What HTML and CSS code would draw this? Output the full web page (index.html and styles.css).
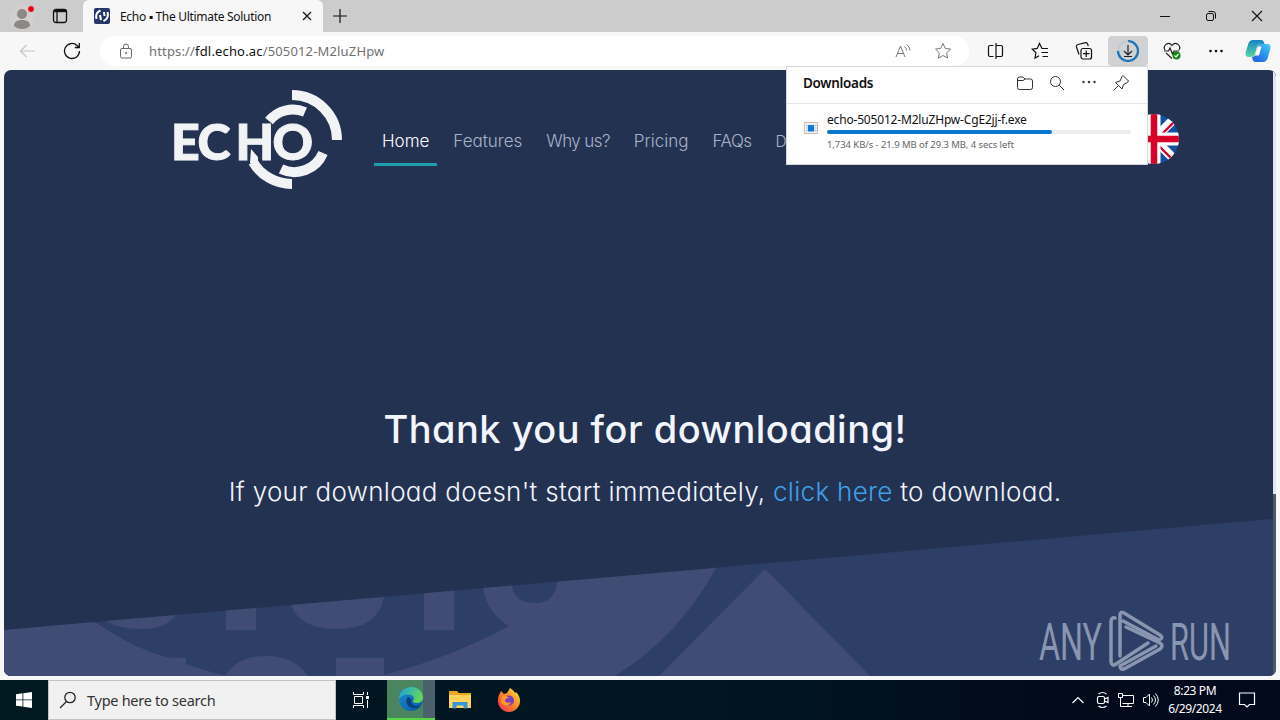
FILE: index.html
```html
<!DOCTYPE html>
<html lang="en">
<head>
    <meta charset="UTF-8">
    <meta name="viewport" content="width=device-width, initial-scale=1.0">
    <title>Echo ▪ The Ultimate Solution</title>
    <link rel="stylesheet" href="styles.css">
</head>
<body>
    <div class="browser">
        <div class="tabstrip">
            <div class="tab-tools">
                <svg class="profile" width="26" height="28" viewBox="0 0 26 28">
                    <circle cx="13" cy="15" r="12.500" fill="#d3cfcf"/>
                    <circle cx="13" cy="12" r="5" fill="#8c8886"/>
                    <path d="M5 24c0-4 3-6 8-6s8 2 8 6c-2 2-5 3-8 3s-6-1-8-3z" fill="#8c8886"/>
                    <circle cx="22" cy="7" r="3.500" fill="#e60012" stroke="#d8d8d8"/>
                </svg>
                <svg class="workspace" width="16" height="16" viewBox="0 0 16 16" fill="none" stroke="#111" stroke-width="1.300">
                    <rect x="1.500" y="1.500" width="13" height="13" rx="2.500"/>
                    <path d="M2 3h12.500" stroke-width="2.400"/>
                    <path d="M5 4v10.500"/>
                </svg>
            </div>
            <div class="tab">
                <svg width="16" height="16" viewBox="0 0 16 16" fill="none" stroke="#fff">
                    <rect width="16" height="16" rx="2" fill="#26356b" stroke="none"/>
                    <path d="M2.500 11c-1-4 .5-7 4-8.500M6 7l1 5M10 4l.5 4M13.500 4c1 4-.5 7.500-4 9" stroke-width="2"/>
                </svg>
                <span class="tab-title">Echo ▪ The Ultimate Solution</span>
                <svg class="tab-close" width="10" height="10" viewBox="0 0 10 10" stroke="#111" stroke-width="1.200"><path d="M1 1l8 8M9 1L1 9"/></svg>
            </div>
            <svg class="new-tab" width="14" height="14" viewBox="0 0 14 14" stroke="#111" stroke-width="1.200"><path d="M7 0v14M0 7h14"/></svg>
            <div class="window-controls">
                <svg width="12" height="12" viewBox="0 0 12 12"><path d="M1 6.500h10" stroke="#111"/></svg>
                <svg width="12" height="12" viewBox="0 0 12 12" fill="none" stroke="#111"><rect x="1.500" y="3.500" width="7" height="7" rx="1.500"/><path d="M3.500 1.500h4.500a2.500 2.500 0 0 1 2.500 2.500v4.500"/></svg>
                <svg width="12" height="12" viewBox="0 0 12 12" stroke="#111" stroke-width="1.100"><path d="M1 1l10 10M11 1L1 11"/></svg>
            </div>
        </div>

        <div class="toolbar">
            <svg class="back" width="18" height="16" viewBox="0 0 18 16" fill="none" stroke="#c6c6c6" stroke-width="1.200"><path d="M16 8H1.500M7.500 2L1.500 8l6 6"/></svg>
            <svg class="reload" width="18" height="18" viewBox="0 0 18 18" fill="none" stroke="#111" stroke-width="1.300"><path d="M16.500 9a7.500 7.500 0 1 1-2.500-5.600L16 5.300M16.300 1v4.500h-4.500"/></svg>
            <div class="address-bar">
                <svg width="14" height="16" viewBox="0 0 14 16" fill="none" stroke="#666"><rect x="1.500" y="5.500" width="11" height="9.500" rx="1.500"/><path d="M4.500 5.500V3.500a2.500 2.500 0 0 1 5 0v2"/><circle cx="7" cy="10" r=".6" fill="#666"/></svg>
                <span class="url">https://<b>fdl.echo.ac</b>/505012-M2luZHpw</span>
                <svg class="read-aloud" width="16" height="16" viewBox="0 0 16 16" fill="none" stroke="#777"><path d="M1 14L5.500 3 10 14M2.500 10.500h6M9.500 3.500q2 1.500 2 4M11.500 1.500q3.500 2 3.500 6"/></svg>
                <svg class="favorite" width="18" height="18" viewBox="0 0 18 18" fill="none" stroke="#777"><path d="M9 1.500l2.300 4.900 5.200.7-3.800 3.700.9 5.300L9 13.500l-4.600 2.600.9-5.300L1.500 7.100l5.200-.7z"/></svg>
            </div>
            <div class="actions">
                <svg width="18" height="18" viewBox="0 0 18 18" fill="none" stroke="#111" stroke-width="1.200"><path d="M6.500 3.500H3a1.500 1.500 0 0 0-1.500 1.500v8A1.500 1.500 0 0 0 3 14.500h3.500M9 3.500h5a1.500 1.500 0 0 1 1.500 1.500v8a1.500 1.500 0 0 1-1.500 1.500H9M9 1v16"/></svg>
                <svg width="18" height="18" viewBox="0 0 18 18" fill="none" stroke="#111" stroke-width="1.200"><path d="M12 6.500h-1L8.500 1.500 6.200 6.400l-5 .7 3.700 3.700-.9 5.200 4-2.200M11.500 6.500H17M10.500 10.500H17M11.500 14.500H17"/></svg>
                <svg width="18" height="18" viewBox="0 0 18 18" fill="none" stroke="#111" stroke-width="1.200"><rect x="6" y="6.500" width="10.500" height="10.500" rx="2"/><path d="M11.200 8.500v6.500M8 11.700h6.500M4 12.500L1.500 5A2 2 0 0 1 3 2.500l7.500-1.800a2 2 0 0 1 2.200 1.500l.5 2"/></svg>
                <div class="download-button">
                    <svg width="24" height="24" viewBox="0 0 24 24" fill="none"><path d="M2 12A10 10 0 0 1 12 2" stroke="#c4c8cc" stroke-width="2"/><path d="M12 2a10 10 0 1 1-10 10" stroke="#1b73b8" stroke-width="2.200"/><path d="M12 6v10M8 12l4 4 4-4M8 17.500h8" stroke="#222" stroke-width="1.200"/></svg>
                </div>
                <svg width="18" height="18" viewBox="0 0 18 18" fill="none" stroke="#222" stroke-width="1.200"><path d="M2 8C-.5 4 5-1.500 9 3.500 13-1.500 18.500 4 16 8M1 9h4.500L7 6l2.500 6L11 9h5M3 11l6 5.500"/><circle cx="13.500" cy="13.500" r="4" fill="#138613" stroke="none"/><path d="M11.500 13.500l1.500 1.500 2.500-3" stroke="#fff"/></svg>
                <svg width="18" height="18" viewBox="0 0 18 18" fill="#111"><circle cx="3.500" cy="9" r="1.300"/><circle cx="9" cy="9" r="1.300"/><circle cx="14.500" cy="9" r="1.300"/></svg>
                <svg class="copilot" width="26" height="24" viewBox="0 0 26 24">
                    <defs>
                        <linearGradient id="pilotA" x1="0" y1="0" x2="0" y2="1"><stop offset="0" stop-color="#1583c8"/><stop offset="1" stop-color="#5dd6a0"/></linearGradient>
                        <linearGradient id="pilotB" x1="1" y1="0" x2="0" y2="1"><stop offset="0" stop-color="#49d3f4"/><stop offset=".5" stop-color="#2a8cf0"/><stop offset="1" stop-color="#2158d8"/></linearGradient>
                    </defs>
                    <path d="M8 1h8c2 0 3 1.500 3.500 4h-4c-2 0-3 1-3.500 3l-2 7c-.5 2-1.500 3-4 3H4c-3 0-4-2-3.200-5l2.400-8C4 2.500 5.500 1 8 1z" fill="url(#pilotA)"/>
                    <path d="M15.500 5H22c3 0 4 2 3.300 5L23 18c-.8 3.500-2.500 5-5 5h-7c-2.500 0-3.500-2-4-5 2 0 3-1 3.500-3l2-7c.5-2 1-3 3-3z" fill="url(#pilotB)"/>
                    <path d="M13 7.500h3.500L14 16.500H9.800z" fill="#fff"/>
                </svg>
            </div>
        </div>

        <div class="page">
            <svg class="backdrop" width="1272" height="606" viewBox="4 70 1272 606">
                <path d="M4 630L1273 519V676H4z" fill="#2e3f67"/>
                <g fill="#404c74">
                    <path d="M4 630L95 622Q136 650 170 658H186V664Q205 671 228 676H4z"/>
                    <path d="M106 621L176 615Q166 629 141 629Q120 629 106 621z"/>
                    <path d="M226 610.600L256 608V630H226z"/>
                    <path d="M291 605L384 597Q378 629 337 629Q300 629 291 605z"/>
                    <path d="M424 593.300L454 590.700V630H424z"/>
                    <path d="M483 588L512 585.600Q514 603 535 603Q555 603 557 581.700L716 568Q680 635 615 676H380Q450 658 509 626Q487 613 483 588z"/>
                    <path d="M225 676Q237 656 265 656Q295 656 308 676zM336 658H384V676H336z"/>
                    <path d="M765 569L870 676H659z"/>
                </g>
            </svg>
            <div class="site-header">
                <svg class="echo-logo" width="172" height="102" viewBox="0 0 172 102">
                    <g fill="none" stroke="#f2f3f5" stroke-width="10">
                        <path d="M120 6A45 45 0 0 1 165 51"/>
                        <path d="M120 95A45 45 0 0 1 81 73"/>
                        <path d="M97 32A31 31 0 0 1 133 23"/>
                        <path d="M151 64A31 31 0 0 1 109 80"/>
                    </g>
                    <path d="M79 60l7 8v8l-8-2z" fill="#f2f3f5"/>
                    <text x="-1 25.500 63.500 100.500" y="70.500">ECHO</text>
                </svg>
                <nav class="menu">
                    <a class="active">Home</a>
                    <a>Features</a>
                    <a class="why">Why us?</a>
                    <a>Pricing</a>
                    <a class="faqs">FAQs</a>
                    <a class="more">D</a>
                </nav>
                <svg class="flag" width="50" height="50" viewBox="0 0 50 50">
                    <clipPath id="round"><circle cx="25" cy="25" r="25"/></clipPath>
                    <g clip-path="url(#round)" fill="none">
                        <path d="M0 0h50v50H0z" fill="#1450a0"/>
                        <path d="M0 0l50 50M50 0L0 50" stroke="#fff" stroke-width="9"/>
                        <path d="M25 27l25 25M28 25L50 3" stroke="#d80027" stroke-width="2.400"/>
                        <path d="M25 0v50M0 25h50" stroke="#fff" stroke-width="13"/>
                        <path d="M25 0v50M0 25h50" stroke="#d80027" stroke-width="6.500"/>
                    </g>
                </svg>
            </div>
            <div class="message">
                <h1>Thank you for downloading!</h1>
                <p>If your download doesn't start immediately, <a>click here</a> to download.</p>
            </div>
            <div class="scrollbar"><div class="thumb"></div></div>
        </div>

        <div class="downloads">
            <div class="downloads-header">
                <h2>Downloads</h2>
                <svg width="18" height="18" viewBox="0 0 18 18" fill="none" stroke="#333"><path d="M1.500 5a2 2 0 0 1 2-2H7l2 2h5.500a2 2 0 0 1 2 2v6.500a2 2 0 0 1-2 2h-11a2 2 0 0 1-2-2zM1.500 6.500H7L9 5"/></svg>
                <svg width="18" height="18" viewBox="0 0 18 18" fill="none" stroke="#333"><circle cx="7.500" cy="7.500" r="5"/><path d="M11 11l5 5"/></svg>
                <svg width="18" height="18" viewBox="0 0 18 18" fill="#333"><circle cx="3.500" cy="8" r="1.200"/><circle cx="9" cy="8" r="1.200"/><circle cx="14.500" cy="8" r="1.200"/></svg>
                <svg width="18" height="18" viewBox="0 0 18 18" fill="none" stroke="#333"><path d="M11 1.500l5.500 5.500-1 1.500-4 2-1.500 4.500L3.500 8.500 8 7l2-4.500zM6.500 11.500L1.500 16.500"/></svg>
            </div>
            <div class="download-item">
                <svg width="14" height="12" viewBox="0 0 14 12"><rect x=".5" y=".5" width="13" height="11" fill="#eef0f2" stroke="#c9bcb3"/><path d="M2 3.500h2M2 6h2M2 8.500h2M10.500 3.500h2M10.500 6h2M10.500 8.500h2" stroke="#9cc3e2"/><rect x="4" y="3" width="6" height="6.500" fill="#1478d4"/></svg>
                <div class="download-info">
                    <div class="file-name">echo-505012-M2luZHpw-CgE2jj-f.exe</div>
                    <div class="progress"><div class="progress-value" style="width: 74%"></div></div>
                    <div class="status">1,734 KB/s - 21.9 MB of 29.3 MB, 4 secs left</div>
                </div>
            </div>
        </div>
    </div>

    <div class="taskbar">
        <svg class="start" width="16" height="16" viewBox="0 0 16 16" fill="#fff"><path d="M0 2.200l6.500-.9v6.200H0zM7.300 1.200L16 0v7.500H7.300zM0 8.300h6.500v6.300L0 13.700zM7.300 8.300H16V16l-8.700-1.200z"/></svg>
        <div class="search">
            <svg width="18" height="18" viewBox="0 0 18 18" fill="none" stroke="#222" stroke-width="1.300"><circle cx="11" cy="6.500" r="5.200"/><path d="M7.500 10.500L1 17"/></svg>
            <span>Type here to search</span>
        </div>
        <div class="task"><svg width="18" height="18" viewBox="0 0 18 18" fill="none" stroke="#fff"><path d="M1.500 1v2.500h10V1M1.500 17v-2.500h10V17M2.500 5.500h8v7h-8zM15.500 1v3M15.500 9v8"/><path d="M14 5h3v3h-3z" fill="#fff" stroke="none"/></svg></div>
        <div class="task active">
            <svg width="26" height="26" viewBox="0 0 26 26">
                <defs>
                    <linearGradient id="edgeTop" x1="0" y1="0" x2="1" y2=".4"><stop offset="0" stop-color="#1ba0e0"/><stop offset="1" stop-color="#62d75c"/></linearGradient>
                    <linearGradient id="edgeLow" x1="0" y1="0" x2="1" y2="1"><stop offset="0" stop-color="#1a91d8"/><stop offset="1" stop-color="#0b54a0"/></linearGradient>
                </defs>
                <circle cx="13" cy="13" r="12" fill="url(#edgeLow)"/>
                <path d="M1 13C1 6 6 1 13 1s12 5 12 10.500c0 4-3 5.500-6 5.500-4 0-5-1.500-3.500-3 1.500-2-.5-5.500-5-5.500S2.500 10.500 1 13z" fill="url(#edgeTop)"/>
                <path d="M10 11c-4 5 0 12 8 11 2 0 4-1 5-2.500-6 2-11-1-9.500-6-1-1-2.500-2.500-3.500-2.500z" fill="#083f80"/>
            </svg>
        </div>
        <div class="task">
            <svg width="22" height="20" viewBox="0 0 22 20"><path d="M0 1h8l2 2h12v15H0z" fill="#e9a820"/><path d="M0 5h22v13H0z" fill="#ffd35c"/><path d="M3.500 18.500v-6.500h15v6.500h-4v-3h-7v3z" fill="#3997d4"/></svg>
        </div>
        <div class="task">
            <svg width="24" height="24" viewBox="0 0 24 24">
                <defs><linearGradient id="fox" x1="1" y1="0" x2="0" y2="1"><stop offset="0" stop-color="#fff04a"/><stop offset=".45" stop-color="#ff8b20"/><stop offset="1" stop-color="#f0285e"/></linearGradient></defs>
                <path d="M3 5l1-2 3 3 3-1 3-5c2 1 4 3 5 5l1-1c3 3 4 6 4 9 0 6-5 11-11 11S1 19 1 13c0-3 .5-6 2-8z" fill="url(#fox)"/>
                <circle cx="12" cy="12.500" r="5" fill="#7a3fc4"/>
                <path d="M5 8c3-1 5 0 7 2-3 0-4 1-4 3 1 2 4 2 6 1-1 4-8 5-10 0z" fill="#ff9a1f"/>
            </svg>
        </div>
        <div class="tray">
            <svg width="14" height="16" viewBox="0 0 14 16" fill="none" stroke="#fff" stroke-width="1.200"><path d="M1.500 11L7 5.500l5.500 5.500"/></svg>
            <svg width="14" height="18" viewBox="0 0 14 18" fill="none" stroke="#fff" stroke-width="1.200"><rect x="1.500" y="5.500" width="7" height="7" rx="1.500"/><path d="M8.500 8L12 6.500v5L8.500 10M2.500 3Q6.500 0 10.500 3M2.500 15q4 3 8 0"/></svg>
            <svg width="18" height="18" viewBox="0 0 18 18" fill="none" stroke="#fff"><path d="M6 4.500h10.500v8H5.500M11 12.500v3M7 15.500h8M1.500 2.500h4v4h-4zM3.500 6.500v9H7"/></svg>
            <svg width="18" height="16" viewBox="0 0 18 16" fill="none" stroke="#fff"><path d="M1.500 5.500H4L7.500 2v12L4 10.500H1.500zM9.500 5.500q2 2.500 0 5M11.500 3.500q4 4.500 0 9M13.500 1.500q5.500 6.500 0 13"/></svg>
        </div>
        <div class="clock"><div>8:23 PM</div><div>6/29/2024</div></div>
        <svg class="notify" width="18" height="18" viewBox="0 0 18 18" fill="none" stroke="#fff" stroke-width="1.200"><path d="M1.500 2h15v11.500h-5L9 16l-2.500-2.500h-5z"/></svg>
    </div>

    <div class="watermark">
        <svg width="204" height="68" viewBox="0 0 204 68">
            <text x="1" y="50.500" textLength="63" lengthAdjust="spacingAndGlyphs">ANY</text>
            <g fill="none" stroke="#949fb8" stroke-width="3.500" stroke-linejoin="round" stroke-linecap="round">
                <path d="M82 47V6Q82 2 86 4L122 26Q126 29 121 31L85 12"/>
                <path d="M77 9Q73 8 73 13V53Q74 58 78 55L110 34"/>
                <path d="M88 18L122 34Q126 37 122 40L86 60Q82 61 82 57L118 37"/>
            </g>
            <text x="132" y="50.500" textLength="61" lengthAdjust="spacingAndGlyphs">RUN</text>
        </svg>
    </div>
</body>
</html>
```

FILE: styles.css
```css
body {
    margin: 0;
    width: 1280px;
    height: 720px;
    overflow: hidden;
    position: relative;
    font-family: 'Noto Sans', sans-serif;
    font-size: 12px;
    color: #111;
}

svg {
    display: block;
    flex-shrink: 0;
}

.browser {
    height: 680px;
    background-color: #f7f7f8;
    position: relative;
}

.tabstrip {
    display: flex;
    height: 32px;
    background-color: #cccccc;
    align-items: center;
}

.tab-tools {
    display: flex;
    align-items: center;
    width: 83px;
    box-sizing: border-box;
    padding-left: 9px;
    gap: 17px;
}

.tab {
    display: flex;
    align-items: center;
    width: 240px;
    height: 32px;
    box-sizing: border-box;
    padding: 0 11px;
    background-color: #f7f7f8;
    border-radius: 6px 6px 0 0;
}

.tab-title {
    margin-left: 10px;
    flex: 1;
    white-space: nowrap;
    font-size: 12px;
    letter-spacing: -.3px;
}

.new-tab {
    margin-left: 10px;
}

.window-controls {
    display: flex;
    gap: 34px;
    margin-left: auto;
    margin-right: 17px;
}

.toolbar {
    display: flex;
    align-items: center;
    height: 38px;
}

.back {
    margin-left: 19px;
}

.reload {
    margin-left: 26px;
}

.address-bar {
    display: flex;
    align-items: center;
    width: 869px;
    height: 30px;
    box-sizing: border-box;
    margin-left: 19px;
    padding: 0 17px 0 19px;
    border-radius: 15px;
    background-color: #fff;
}

.url {
    flex: 1;
    margin-left: 16px;
    font-size: 13px;
    letter-spacing: .16px;
    color: #707070;
}

.url b {
    font-weight: 400;
    color: #111;
}

.favorite {
    margin-left: 23px;
}

.actions {
    display: flex;
    align-items: center;
    margin-left: 18px;
    gap: 26px;
}

.download-button {
    display: flex;
    align-items: center;
    justify-content: center;
    width: 40px;
    height: 30px;
    margin: 0 -11px;
    border-radius: 4px;
    background-color: #d0d1d3;
}

.copilot {
    margin-left: -6px;
}

.page {
    position: relative;
    height: 606px;
    margin: 0 4px;
    border-radius: 7px;
    overflow: hidden;
    background-color: #243252;
    font-family: Inter, sans-serif;
    font-feature-settings: 'cv11';
}

.backdrop {
    position: absolute;
    left: 0;
    top: 0;
}

.site-header {
    position: relative;
    display: flex;
    align-items: center;
    height: 140px;
    padding-left: 168px;
}

.echo-logo text {
    font-family: Lato, sans-serif;
    font-size: 50px;
    font-weight: 900;
    fill: #f2f3f5;
    stroke: #f2f3f5;
    stroke-width: 1px;
}

.menu {
    display: flex;
    margin-left: 30px;
    width: 740px;
    gap: 8px;
    padding-top: 2px;
    font-size: 17px;
    font-weight: 300;
}

.menu a {
    padding: 14px 8px 11px;
    color: #a9b3c8;
    border-bottom: 3px solid transparent;
}

.menu .active {
    color: #fff;
    border-bottom-color: #1f9eab;
}

.menu .why {
    letter-spacing: -.6px;
}

.menu .faqs {
    letter-spacing: -.5px;
}

.menu .more {
    font-size: 15.5px;
    line-height: 21px;
}

.flag {
    margin-left: 15px;
    margin-bottom: 2px;
}

.message {
    position: relative;
    margin-top: 193px;
    padding-left: 10px;
    text-align: center;
    color: #f2f5fb;
}

.message h1 {
    margin: 0;
    font-size: 38px;
    line-height: 52px;
    font-weight: 500;
    letter-spacing: .47px;
}

.message p {
    margin: 17px 0 0;
    font-size: 26px;
    line-height: 40px;
    font-weight: 300;
    letter-spacing: .3px;
}

.message a {
    color: #3fa0e8;
}

.scrollbar {
    position: absolute;
    right: 0;
    top: 0;
    width: 3px;
    height: 606px;
    background-color: #4b5869;
}

.thumb {
    height: 424px;
    background-color: #e4e5ed;
}

.downloads {
    position: absolute;
    left: 786px;
    top: 66px;
    width: 362px;
    height: 99px;
    box-sizing: border-box;
    border: 1px solid #d5d8df;
    background-color: #fff;
}

.downloads-header {
    display: flex;
    align-items: center;
    gap: 14px;
    height: 37px;
    padding: 0 17px 4px 16px;
    box-sizing: border-box;
    border-bottom: 1px solid #e6e6e6;
}

.downloads h2 {
    flex: 1;
    margin: 0;
    font-size: 13.5px;
    font-weight: 600;
    letter-spacing: -.3px;
}

.download-item {
    display: flex;
    gap: 9px;
    padding: 7px 16px 0 17px;
}

.download-item > svg {
    margin-top: 11px;
}

.download-info {
    flex: 1;
}

.file-name {
    line-height: 17px;
    font-size: 12px;
    letter-spacing: -.18px;
}

.progress {
    height: 4px;
    margin-top: 2px;
    border-radius: 2px;
    background-color: #ededed;
}

.progress-value {
    height: 4px;
    border-radius: 2px;
    background-color: #0b78d0;
}

.status {
    margin-top: 4px;
    line-height: 14px;
    font-size: 9.5px;
    letter-spacing: -.07px;
    color: #666;
}

.taskbar {
    display: flex;
    align-items: center;
    height: 40px;
    background: linear-gradient(to right, #001820, #001522 60%, #020a1a 82%, #02091a);
    color: #fff;
}

.start {
    margin: 0 16px;
}

.search {
    display: flex;
    align-items: center;
    gap: 10px;
    width: 288px;
    height: 40px;
    box-sizing: border-box;
    padding-left: 10px;
    border: 1px solid #c2c2c2;
    background-color: #f1f1f1;
    font-size: 14.5px;
    letter-spacing: -.27px;
    color: #333;
}

.task {
    display: flex;
    align-items: center;
    justify-content: center;
    width: 48px;
    height: 40px;
    margin-right: 1px;
}

.search + .task {
    width: 50px;
}

.task.active {
    box-sizing: border-box;
    border-bottom: 2px solid #57d544;
    background: linear-gradient(to right, #4b8560 36px, #4a606a 36px);
}

.tray {
    display: flex;
    align-items: center;
    gap: 7px;
    margin-left: auto;
    margin-right: 7px;
}

.tray svg:nth-child(2) {
    margin-left: 4px;
}

.clock {
    width: 56px;
    line-height: 18px;
    text-align: center;
    white-space: nowrap;
    letter-spacing: -.4px;
}

.notify {
    margin: 0 24px 0 15px;
}

.watermark {
    position: absolute;
    left: 1038px;
    top: 609px;
    opacity: .9;
}

.watermark text {
    font-family: Roboto, sans-serif;
    font-size: 51px;
    font-weight: 400;
    fill: #949fb8;
}
```
